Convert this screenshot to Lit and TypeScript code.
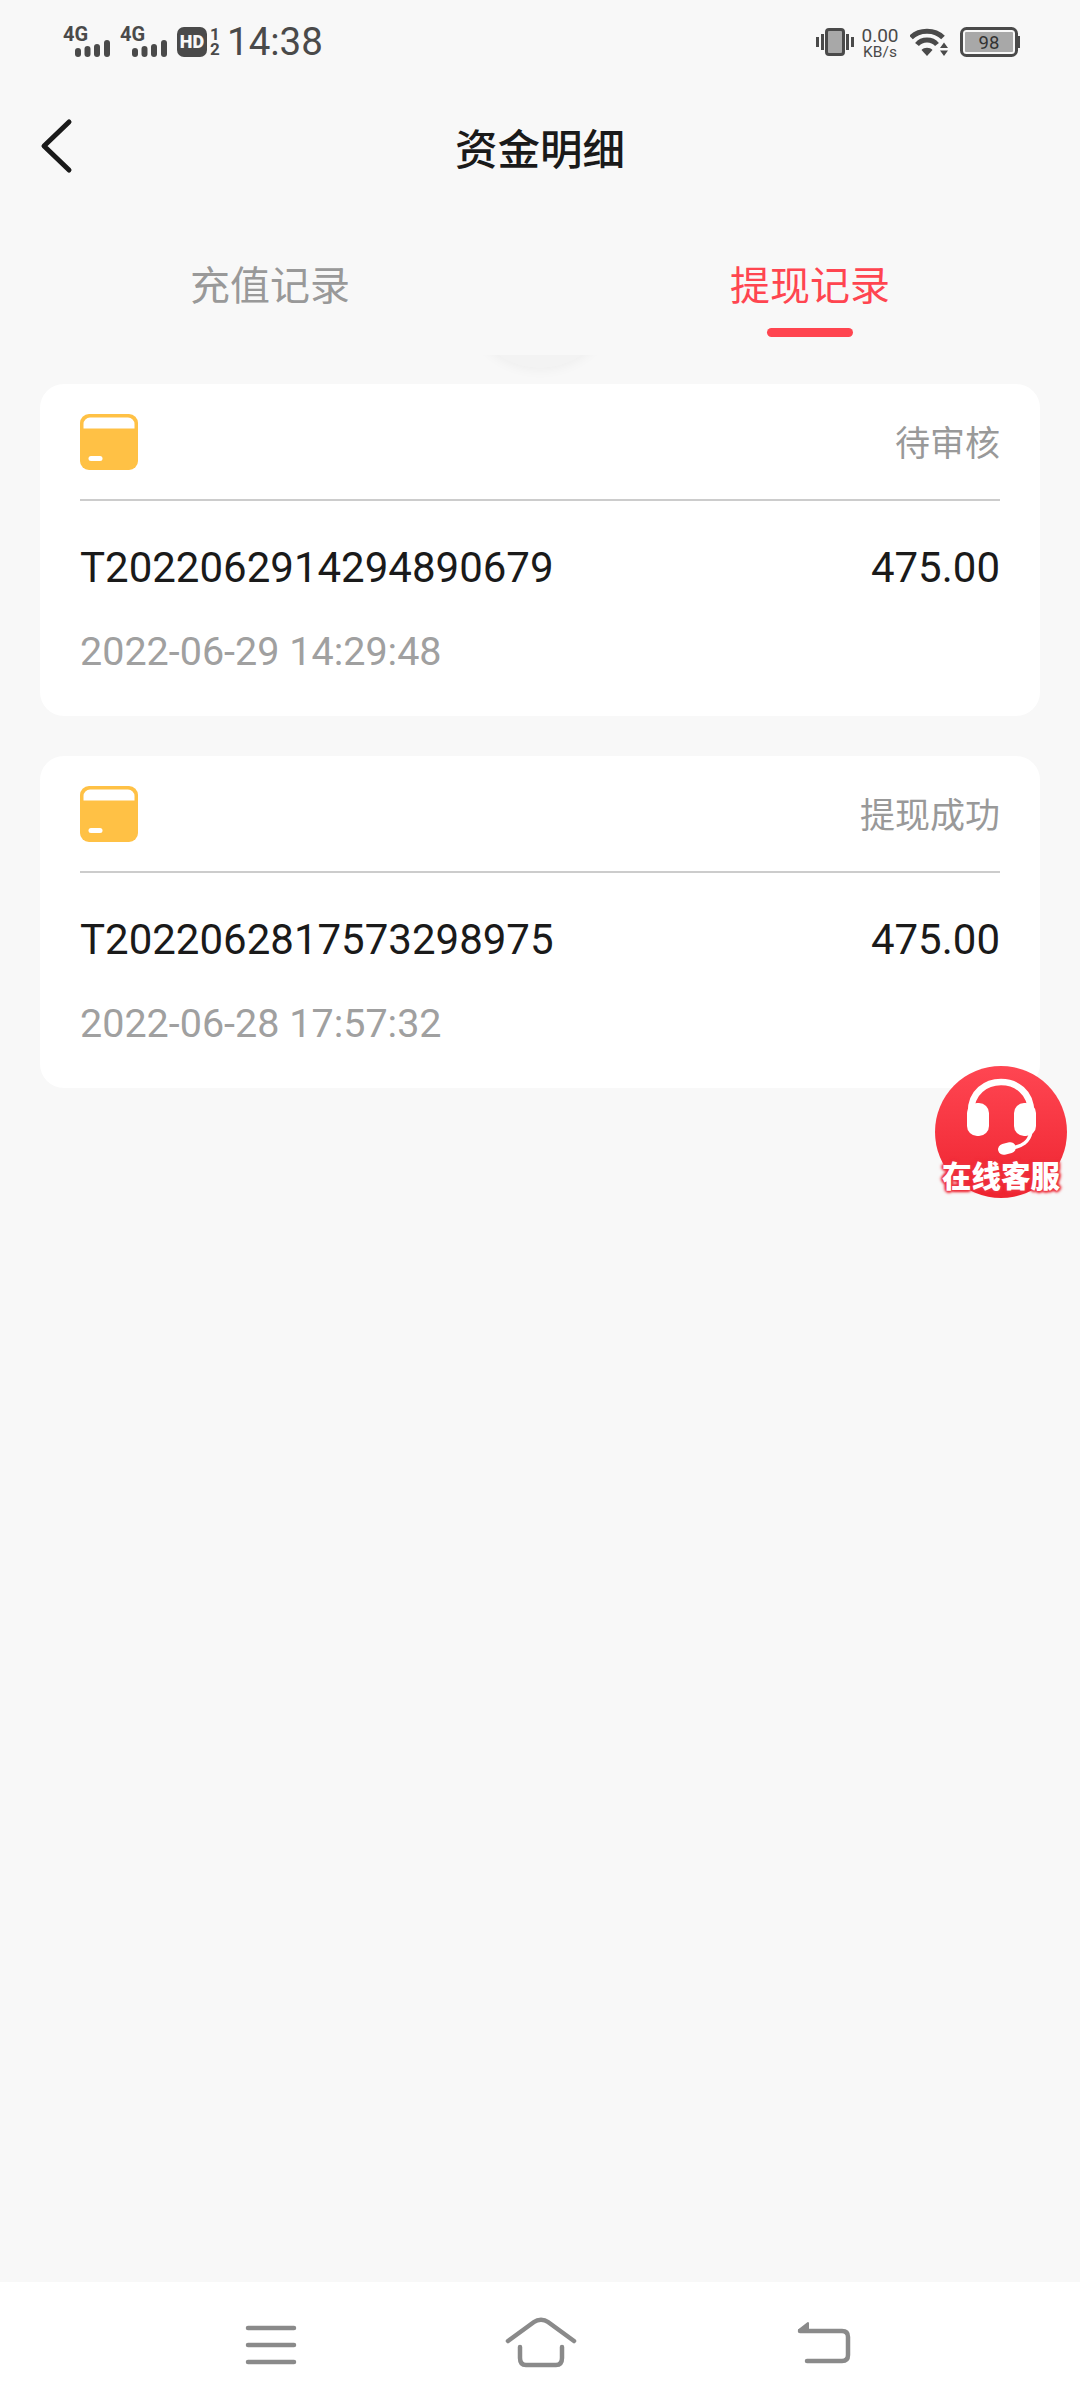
import { LitElement, html, css, svg } from "lit";
import { customElement } from "lit/decorators.js";

const signal = html`<span class="sig">
  <span class="sig-t">4G</span>
  <svg class="sig-b" width="35" height="17" viewBox="0 0 35 17" fill="#4a4a4a">
    <rect x="0" y="8" width="6" height="9" rx="3"/>
    <rect x="9.500" y="6" width="6" height="11" rx="3"/>
    <rect x="19" y="4" width="6" height="13" rx="3"/>
    <rect x="29" y="0" width="6" height="17" rx="3"/>
  </svg>
</span>`;

const cardIcon = svg`<svg class="ic" width="58" height="56" viewBox="0 0 58 56">
  <rect width="58" height="56" rx="9" fill="#FFC145"/>
  <path d="M3.500 14.500V10a6.500 6.500 0 0 1 6.500-6.500h38a6.500 6.500 0 0 1 6.500 6.500v4.500z" fill="#fff"/>
  <rect x="8.500" y="42" width="14" height="5" rx="2.500" fill="#fff"/>
</svg>`;

interface Rec { status: string; id: string; amount: string; date: string; }
const RECORDS: Rec[] = [
  { status: "待审核", id: "T2022062914294890679", amount: "475.00", date: "2022-06-29 14:29:48" },
  { status: "提现成功", id: "T2022062817573298975", amount: "475.00", date: "2022-06-28 17:57:32" },
];

@customElement("app-root")
export class AppRoot extends LitElement {
  static styles = css`
    :host { display: block; width: 1080px; height: 2408px; font-family: Roboto, "Noto Sans CJK SC", sans-serif; }
    .page { position: relative; width: 1080px; height: 2408px; background: #f8f8f8; display: flex; flex-direction: column; overflow: hidden; }

    .status { height: 80px; box-sizing: border-box; padding: 3px 60px 0 63px; flex: none; display: flex; align-items: center; justify-content: space-between; color: #4a4a4a; }
    .st-l, .st-r { display: flex; align-items: center; }
    .sig { position: relative; width: 47px; height: 31px; margin-right: 10px; display: block; }
    .sig-t { position: absolute; left: 0; top: -2px; font: 700 20px/20px Roboto, sans-serif; color: #4a4a4a; }
    .sig-b { position: absolute; right: 0; bottom: 0; }
    .hd { width: 30px; height: 30px; border-radius: 7px; background: #4a4a4a; color: #f8f8f8; font: 900 18px/30px Roboto, sans-serif; text-align: center; }
    .frac { width: 12px; margin-left: 2px; text-align: center; font: 700 17px/15px Roboto, sans-serif; }
    .time { font: 400 38.500px/40px Roboto, sans-serif; margin-left: 6px; }
    .vib { margin-right: 7px; }
    .speed { width: 38px; display: flex; flex-direction: column; align-items: center; margin-right: 11px; padding-top: 3px; }
    .speed b { font: 400 19px/18px Roboto, sans-serif; }
    .speed i { font: 400 15.500px/15px Roboto, sans-serif; }
    .wifi { margin-right: 12px; }

    .nav { height: 140px; flex: none; position: relative; display: flex; align-items: center; justify-content: center; padding-top: 2px; box-sizing: border-box; }
    .nav h1 { margin: 0; font-size: 42.500px; font-weight: 500; color: #1a1a1a; line-height: 60px; }
    .back { position: absolute; left: 38px; top: 36px; }

    .tabs { height: 135px; flex: none; display: flex; }
    .tab { flex: 1; position: relative; text-align: center; font-size: 40px; line-height: 56px; padding-top: 39px; color: #999; }
    .tab.on { color: #ff4550; }
    .tab.on::after { content: ""; position: absolute; left: 227px; bottom: 18px; width: 86px; height: 9px; border-radius: 4.500px; background: #ff4550; }

    .list { flex: 1; position: relative; overflow: hidden; padding: 29px 40px 0; display: flex; flex-direction: column; gap: 40px; }
    .bump { position: absolute; left: 466px; top: -135px; width: 148px; height: 148px; border-radius: 50%; background: #f3f3f3; box-shadow: 0 0 14px rgba(0,0,0,.06); }

    .card { position: relative; height: 332px; box-sizing: border-box; background: #fff; border-radius: 24px; padding: 0 40px; }
    .head { height: 117px; box-sizing: border-box; display: flex; align-items: center; justify-content: space-between; border-bottom: 2px solid #ccc; }
    .ic { display: block; }
    .state { font-size: 35px; color: #999; line-height: 50px; margin-top: 6px; }
    .row { display: flex; justify-content: space-between; margin-top: 37px; font-size: 42px; line-height: 60px; color: #1a1a1a; }
    .date { margin-top: 29px; font-size: 39.500px; line-height: 50px; color: #a0a0a0; }

    .kefu { position: absolute; left: 935px; top: 1066px; width: 132px; height: 132px; }
    .disc { width: 132px; height: 132px; border-radius: 50%; background: linear-gradient(180deg, #ff4652, #ee2430); }
    .kefu svg { position: absolute; left: 0; top: 0; }
    .kefu span { position: absolute; left: 7px; top: 93px; width: 118px; white-space: nowrap; text-align: center; font-size: 29.500px; line-height: 36px; font-weight: 900; color: #fff;
      text-shadow: 0 0 2px #ee3440, 0 0 3px #ee3440, 2px 0 3px #ee3440, -2px 0 3px #ee3440, 0 2px 3px #ee3440, 0 -2px 3px #ee3440; }

    .bar { height: 126px; flex: none; background: #fff; position: relative; }
    .bar svg { display: block; }
  `;

  render() {
    return html`<div class="page">
      <div class="status">
        <div class="st-l">
          ${signal}${signal}
          <span class="hd">HD</span>
          <span class="frac">1 2</span>
          <span class="time">14:38</span>
        </div>
        <div class="st-r">
          <svg class="vib" width="38" height="28" viewBox="0 0 38 28">
            <rect x="0" y="9" width="3" height="10" fill="#4a4a4a"/>
            <rect x="5" y="6" width="3" height="16" fill="#4a4a4a"/>
            <rect x="30" y="6" width="3" height="16" fill="#4a4a4a"/>
            <rect x="35" y="9" width="3" height="10" fill="#4a4a4a"/>
            <rect x="10.500" y="1.500" width="17" height="25" rx="2.500" fill="#a8a8a8" stroke="#4a4a4a" stroke-width="3"/>
          </svg>
          <span class="speed"><b>0.00</b><i>KB/s</i></span>
          <svg class="wifi" width="38" height="28" viewBox="0 0 38 28" fill="none" stroke="#4a4a4a" stroke-width="5">
            <path d="M1 9.500C9 1 25 1 33 9.500"/>
            <path d="M7 16.500C12 10.500 22 10.500 27 16.500"/>
            <path d="M11.500 22C14 19 20 19 22.500 22L17 28Z" fill="#4a4a4a" stroke="none"/>
            <path d="M30 20L34 14.500 38 20ZM30 22.500L34 28 38 22.500Z" fill="#4a4a4a" stroke="none"/>
          </svg>
          <svg width="60" height="30" viewBox="0 0 60 30">
            <rect x="1.500" y="1.500" width="55" height="27" rx="5" fill="#f8f8f8" stroke="#4a4a4a" stroke-width="3"/>
            <rect x="5" y="5" width="48" height="20" rx="1" fill="#a8a8a8"/>
            <rect x="58" y="9" width="2" height="12" fill="#4a4a4a"/>
            <text x="29" y="21.500" text-anchor="middle" font-family="Roboto, sans-serif" font-size="18.500" fill="#333">98</text>
          </svg>
        </div>
      </div>

      <div class="nav">
        <svg class="back" width="36" height="60" viewBox="0 0 36 60" fill="none" stroke="#1a1a1a" stroke-width="5" stroke-linecap="round" stroke-linejoin="round">
          <path d="M31 6 6 30 31 54"/>
        </svg>
        <h1>资金明细</h1>
      </div>

      <div class="tabs">
        <div class="tab">充值记录</div>
        <div class="tab on">提现记录</div>
      </div>

      <div class="list">
        <div class="bump"></div>
        ${RECORDS.map(r => html`<div class="card">
          <div class="head">${cardIcon}<span class="state">${r.status}</span></div>
          <div class="row"><span>${r.id}</span><span>${r.amount}</span></div>
          <div class="date">${r.date}</div>
        </div>`)}
      </div>

      <div class="kefu">
        <div class="disc"></div>
        <svg width="132" height="132" viewBox="0 0 132 132" fill="none">
          <path d="M36 46C36 6 96 6 96 46" stroke="#fff" stroke-width="6.500"/>
          <rect x="32" y="37" width="22" height="33" rx="10" fill="#fff"/>
          <rect x="79" y="37" width="22" height="33" rx="10" fill="#fff"/>
          <path d="M96 66C94 76 88 80 74 83" stroke="#fff" stroke-width="3.500"/>
          <rect x="63" y="77" width="18" height="11" rx="5.500" fill="#fff" transform="rotate(-14 72 82.500)"/>
        </svg>
        <span>在线客服</span>
      </div>

      <div class="bar">
        <svg width="1080" height="126" viewBox="0 0 1080 126" fill="none" stroke="#8a8a8a" stroke-width="4.500" stroke-linecap="round" stroke-linejoin="round">
          <path d="M248 46H294M248 63H294M248 80H294"/>
          <path d="M508 59 534 40C538 37 544 37 548 40L574 59"/>
          <path d="M520 65V76C520 81 522 83 526 83H556C560 83 562 81 562 76V65"/>
          <path d="M800 49H842C846 49 848 51 848 55V73C848 77 846 79 842 79H807"/>
          <path d="M799 48 808 41V49Z" fill="#8a8a8a" stroke-width="2"/>
        </svg>
      </div>
    </div>`;
  }
}
